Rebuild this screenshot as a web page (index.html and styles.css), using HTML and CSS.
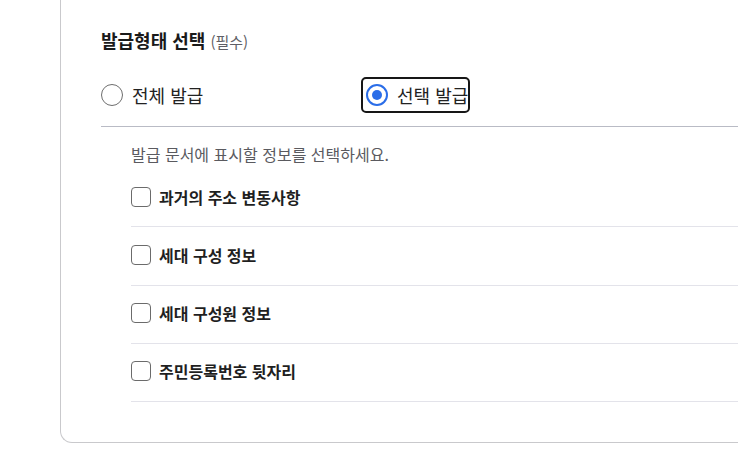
FILE: index.html
```html
<!DOCTYPE html>
<html lang="ko">
<head>
<meta charset="utf-8">
<title>발급형태 선택</title>
<link rel="stylesheet" href="styles.css">
</head>
<body>
<section class="card">
  <h2 class="card-title">발급형태 선택 <span class="required">(필수)</span></h2>
  <div class="radio-group" role="radiogroup">
    <label class="option">
      <span class="radio"></span>
      <span class="option-text">전체 발급</span>
    </label>
    <label class="option is-focused">
      <span class="radio is-checked"><span class="dot"></span></span>
      <span class="option-text">선택 발급</span>
    </label>
  </div>
  <div class="details">
    <p class="hint">발급 문서에 표시할 정보를 선택하세요.</p>
    <ul class="check-list">
      <li class="check-row"><span class="checkbox"></span><span class="check-text">과거의 주소 변동사항</span></li>
      <li class="check-row"><span class="checkbox"></span><span class="check-text">세대 구성 정보</span></li>
      <li class="check-row"><span class="checkbox"></span><span class="check-text">세대 구성원 정보</span></li>
      <li class="check-row"><span class="checkbox"></span><span class="check-text">주민등록번호 뒷자리</span></li>
    </ul>
  </div>
</section>
</body>
</html>
```
FILE: styles.css
```css
html, body {
  margin: 0;
  padding: 0;
  background: #ffffff;
}
body {
  font-family: "Noto Sans CJK KR", "Noto Sans", sans-serif;
  color: #1f1f1f;
}
.card {
  margin: 0 0 0 60px;
  border-left: 1px solid #c9c9cc;
  border-bottom: 1px solid #c9c9cc;
  border-radius: 0 0 0 12px;
  padding: 28px 0 40px 40px;
}
.card-title {
  margin: 0;
  height: 24px;
  font-size: 18px;
  line-height: 24px;
  font-weight: 700;
  color: #1a1a1a;
}
.required {
  font-size: 15px;
  line-height: 1;
  font-weight: 400;
  color: #5f5f66;
}
.radio-group {
  display: grid;
  grid-template-columns: 265px auto;
  justify-content: start;
  margin-top: 27px;
  padding-bottom: 15px;
  border-bottom: 1px solid #b9bbc5;
}
.option {
  display: inline-flex;
  align-items: center;
  gap: 9px;
  height: 32px;
  margin-left: -3px;
  padding: 0 0 0 3px;
  border-radius: 3px;
  justify-self: start;
  cursor: pointer;
}
.option.is-focused {
  outline: 2px solid #161616;
  outline-offset: 0;
}
.radio {
  width: 22px;
  height: 22px;
  box-sizing: border-box;
  border: 1.5px solid #6e6e6e;
  border-radius: 50%;
  display: flex;
  align-items: center;
  justify-content: center;
  flex: none;
}
.radio.is-checked {
  border: 2px solid #2a6de8;
}
.dot {
  width: 10px;
  height: 10px;
  border-radius: 50%;
  background: #2a6de8;
}
.option-text {
  font-size: 18px;
  line-height: 24px;
  color: #222222;
}
.details {
  padding-left: 30px;
  padding-top: 16px;
}
.hint {
  margin: 0;
  font-size: 16px;
  line-height: 22px;
  color: #5a5a5f;
}
.check-list {
  list-style: none;
  margin: 4px 0 0 0;
  padding: 0;
}
.check-row {
  display: flex;
  align-items: center;
  gap: 8px;
  padding: 17.5px 0 19.83px;
  line-height: 20px;
  border-bottom: 1px solid #e3e3ea;
}
.checkbox {
  width: 20px;
  height: 20px;
  box-sizing: border-box;
  border: 1.5px solid #6b6b6b;
  border-radius: 4px;
  flex: none;
}
.check-text {
  font-size: 16px;
  font-weight: 700;
  color: #1f1f1f;
}
```
